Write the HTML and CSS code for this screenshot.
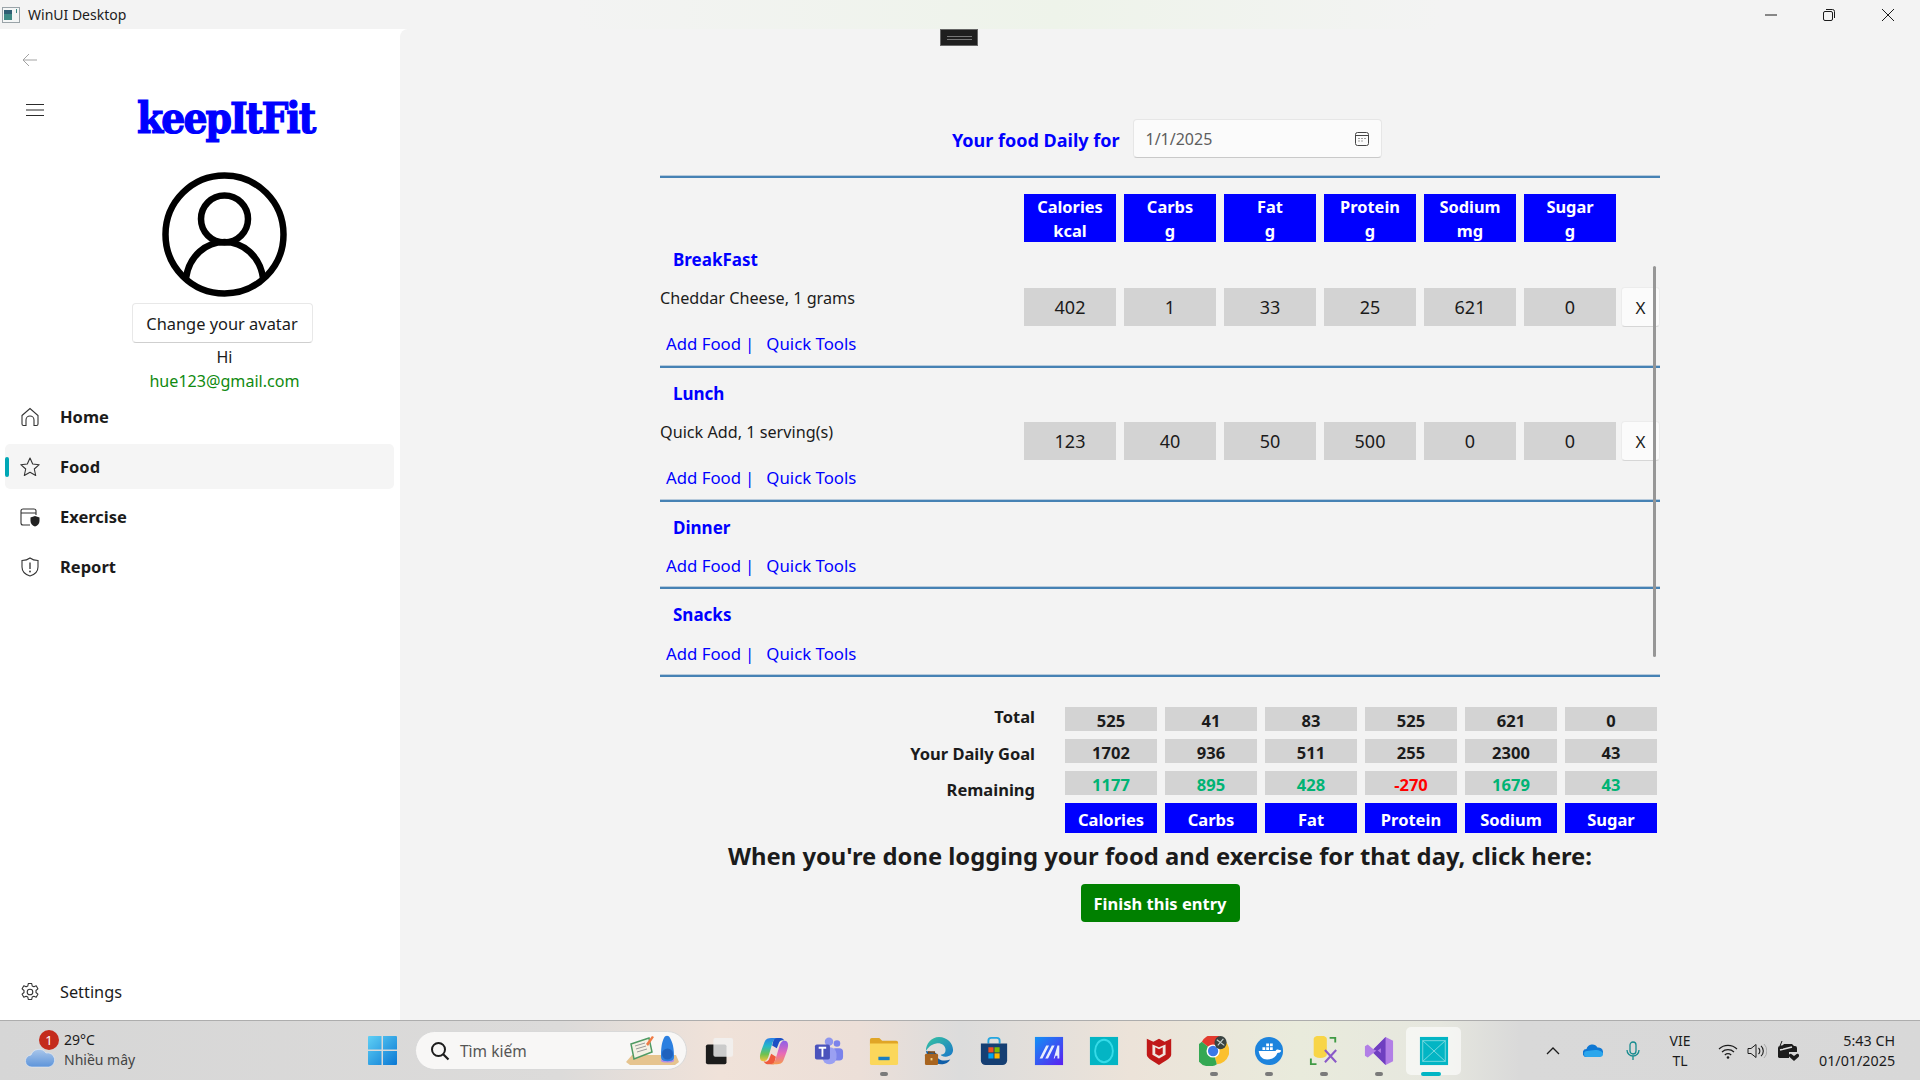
FILE: index.html
```html
<!DOCTYPE html>
<html lang="en">

<head>
  <meta charset="UTF-8">
  <meta name="viewport" content="width=device-width, initial-scale=1.0">
  <title>WinUI Desktop</title>
  <link rel="stylesheet" href="styles.css">
</head>

<body>
  <div class="window">

    <header class="titlebar">
      <svg class="app-icon" viewBox="0 0 18 16" width="18" height="16">
        <rect x=".5" y=".5" width="17" height="15" fill="#f4f6f6" stroke="#9aa3a8"/>
        <rect x="2" y="3" width="8" height="10" fill="#3d8a86"/>
        <rect x="2" y="3" width="8" height="4" fill="#2f5f74"/>
        <rect x="14" y="2" width="1" height="4" fill="#3d8a86"/>
      </svg>
      <span class="app-title">WinUI Desktop</span>
      <div class="win-buttons">
        <button class="win-btn"><svg viewBox="0 0 12 12" width="12" height="12"><path d="M0 6h12" stroke="#1a1a1a" fill="none"/></svg></button>
        <button class="win-btn"><svg viewBox="0 0 12 12" width="12" height="12"><rect x=".5" y="2.500" width="9" height="9" rx="1.500" stroke="#1a1a1a" fill="none"/><path d="M3 .5h6.500a2 2 0 0 1 2 2V9" stroke="#1a1a1a" fill="none"/></svg></button>
        <button class="win-btn"><svg viewBox="0 0 12 12" width="12" height="12"><path d="M0 0l12 12M12 0L0 12" stroke="#1a1a1a" fill="none"/></svg></button>
      </div>
    </header>

    <div class="content">

      <aside class="sidebar">
        <div class="back-row">
          <svg viewBox="0 0 16 14" width="16" height="14"><path d="M15 7H1M7 1L1 7l6 6" stroke="#a3a3a3" stroke-width="1" fill="none"/></svg>
        </div>
        <div class="logo-row">
          <svg class="hamburger" viewBox="0 0 18 14" width="18" height="14"><path d="M0 1.500h18M0 7h18M0 12.500h18" stroke="#2b2b2b" stroke-width="1.200" fill="none"/></svg>
          <span class="logo">keepItFit</span>
        </div>

        <div class="profile">
          <svg class="avatar" viewBox="0 0 125 125" width="125" height="125">
            <g fill="none" stroke="#000" stroke-width="6.500">
              <circle cx="62.500" cy="62.500" r="59"/>
              <circle cx="62.500" cy="47" r="23.500"/>
              <path d="M24 106c3-22 20-36 38.500-36S98 84 101 106"/>
            </g>
          </svg>
          <button class="avatar-btn">Change your avatar</button>
          <div class="hi">Hi</div>
          <div class="email">hue123@gmail.com</div>
        </div>

        <nav class="nav">
          <a class="nav-item">
            <svg viewBox="0 0 20 20" width="20" height="20"><path d="M2 8.500L10 1.500l8 7V17a1.500 1.500 0 0 1-1.500 1.500H14V13a4 4 0 0 0-8 0v5.500H3.500A1.500 1.500 0 0 1 2 17z" fill="none" stroke="#333" stroke-width="1.100"/></svg>
            <span>Home</span>
          </a>
          <a class="nav-item active">
            <svg viewBox="0 0 20 20" width="20" height="20"><path d="M10 1l2.700 6 6.500.7-4.900 4.300 1.400 6.500L10 15.200l-5.700 3.300 1.400-6.500L.8 7.700 7.300 7z" fill="none" stroke="#333" stroke-width="1.100" stroke-linejoin="round"/></svg>
            <span>Food</span>
          </a>
          <a class="nav-item">
            <svg viewBox="0 0 20 20" width="20" height="20"><path d="M10 18H3a2 2 0 0 1-2-2V4a2 2 0 0 1 2-2h11a2 2 0 0 1 2 2v4M1 6h15" fill="none" stroke="#333" stroke-width="1.100"/><path d="M15 9l4.500 1.500V14c0 3-2 4.500-4.500 5.500-2.500-1-4.500-2.500-4.500-5.500v-3.500z" fill="#222"/></svg>
            <span>Exercise</span>
          </a>
          <a class="nav-item">
            <svg viewBox="0 0 20 20" width="20" height="20"><path d="M10 1c2 1.600 4.500 2.500 8 2.500V10c0 4.500-3 7.500-8 9-5-1.500-8-4.500-8-9V3.500C5.500 3.500 8 2.600 10 1z" fill="none" stroke="#333" stroke-width="1.100"/><path d="M10 5.500v6.500" stroke="#333" stroke-width="1.300"/><circle cx="10" cy="14.500" r=".9" fill="#333"/></svg>
            <span>Report</span>
          </a>
        </nav>

        <a class="nav-item settings">
          <svg viewBox="0 0 20 20" width="20" height="20"><circle cx="10" cy="10" r="2.800" fill="none" stroke="#333" stroke-width="1.100"/><path d="M8.300 1.500h3.400l.5 2.500 1.700.8 2.300-1 1.700 3-1.900 1.700v2l1.900 1.700-1.700 3-2.300-1-1.700.8-.5 2.500H8.300l-.5-2.500-1.700-.8-2.300 1-1.700-3 1.900-1.700v-2L2.100 6.800l1.700-3 2.300 1 1.700-.8z" fill="none" stroke="#333" stroke-width="1.100" stroke-linejoin="round"/></svg>
          <span class="settings-label">Settings</span>
        </a>
      </aside>

      <main class="main">
        <div class="debug-bar"><i></i></div>
        <div class="scroll-thumb"></div>

        <div class="date-row">
          <span class="date-label">Your food Daily for</span>
          <div class="date-picker">
            <span>1/1/2025</span>
            <svg viewBox="0 0 14 14" width="14" height="14"><rect x=".5" y=".5" width="13" height="13" rx="2" fill="none" stroke="#444"/><path d="M1 3.500h12" stroke="#444"/><path d="M3.500 6.500h1M6.500 6.500h1M9.500 6.500h1M3.500 9h1M6.500 9h1" stroke="#444" stroke-width="1.200"/></svg>
          </div>
        </div>

        <div class="head-cells cells">
          <div class="head-cell">Calories<br>kcal</div>
          <div class="head-cell">Carbs<br>g</div>
          <div class="head-cell">Fat<br>g</div>
          <div class="head-cell">Protein<br>g</div>
          <div class="head-cell">Sodium<br>mg</div>
          <div class="head-cell">Sugar<br>g</div>
        </div>

        <section class="meal first">
          <h3 class="meal-title">BreakFast</h3>
          <div class="food-row">
            <span class="food-name">Cheddar Cheese, 1 grams</span>
            <div class="cells">
              <div class="cell">402</div><div class="cell">1</div><div class="cell">33</div>
              <div class="cell">25</div><div class="cell">621</div><div class="cell">0</div>
            </div>
            <button class="remove-btn">X</button>
          </div>
          <div class="meal-links"><a>Add Food</a><span class="sep">|</span><a>Quick Tools</a></div>
        </section>

        <section class="meal">
          <h3 class="meal-title">Lunch</h3>
          <div class="food-row">
            <span class="food-name">Quick Add, 1 serving(s)</span>
            <div class="cells">
              <div class="cell">123</div><div class="cell">40</div><div class="cell">50</div>
              <div class="cell">500</div><div class="cell">0</div><div class="cell">0</div>
            </div>
            <button class="remove-btn">X</button>
          </div>
          <div class="meal-links"><a>Add Food</a><span class="sep">|</span><a>Quick Tools</a></div>
        </section>

        <section class="meal empty dinner">
          <h3 class="meal-title">Dinner</h3>
          <div class="meal-links"><a>Add Food</a><span class="sep">|</span><a>Quick Tools</a></div>
        </section>

        <section class="meal empty snacks">
          <h3 class="meal-title">Snacks</h3>
          <div class="meal-links"><a>Add Food</a><span class="sep">|</span><a>Quick Tools</a></div>
        </section>

        <div class="totals">
          <div class="total-labels">
            <div>Total</div>
            <div>Your Daily Goal</div>
            <div>Remaining</div>
          </div>
          <div class="total-rows">
            <div class="cells">
              <div class="sum">525</div><div class="sum">41</div><div class="sum">83</div>
              <div class="sum">525</div><div class="sum">621</div><div class="sum">0</div>
            </div>
            <div class="cells">
              <div class="sum">1702</div><div class="sum">936</div><div class="sum">511</div>
              <div class="sum">255</div><div class="sum">2300</div><div class="sum">43</div>
            </div>
            <div class="cells">
              <div class="sum good">1177</div><div class="sum good">895</div><div class="sum good">428</div>
              <div class="sum bad">-270</div><div class="sum good">1679</div><div class="sum good">43</div>
            </div>
            <div class="cells">
              <div class="foot-cell">Calories</div><div class="foot-cell">Carbs</div><div class="foot-cell">Fat</div>
              <div class="foot-cell">Protein</div><div class="foot-cell">Sodium</div><div class="foot-cell">Sugar</div>
            </div>
          </div>
        </div>

        <h2 class="done-text">When you're done logging your food and exercise for that day, click here:</h2>
        <button class="finish-btn">Finish this entry</button>
      </main>
    </div>

    <footer class="taskbar">
      <div class="weather">
        <span class="weather-icon">
          <svg viewBox="0 0 31 20" width="31" height="20"><defs><linearGradient id="cloud" x1="0" y1="0" x2="0" y2="1"><stop offset="0" stop-color="#a9c6ea"/><stop offset="1" stop-color="#5d94da"/></linearGradient></defs><path d="M7 19a6 6 0 0 1-1-12 8.500 8.500 0 0 1 15-2 6.500 6.500 0 0 1 3 14z" fill="url(#cloud)" stroke="#e8eef6" stroke-width=".6"/></svg>
          <b class="badge">1</b>
        </span>
        <div class="weather-text">
          <div>29°C</div>
          <div class="weather-sub">Nhiều mây</div>
        </div>
      </div>

      <svg class="start" viewBox="0 0 29 29" width="29" height="29">
        <defs><linearGradient id="win" x1="0" y1="0" x2="1" y2="1"><stop offset="0" stop-color="#5fd0f5"/><stop offset="1" stop-color="#0a78d4"/></linearGradient></defs>
        <path d="M0 1a1 1 0 0 1 1-1h12.500v13.500H0zM15 0h13a1 1 0 0 1 1 1v12.500H15zM0 15h13.500v14H1a1 1 0 0 1-1-1zM15 15h14v13a1 1 0 0 1-1 1H15z" fill="url(#win)"/>
      </svg>

      <div class="search">
        <svg viewBox="0 0 20 20" width="20" height="20"><circle cx="8.500" cy="8.500" r="6.500" fill="none" stroke="#1c1c1c" stroke-width="2"/><path d="M13 13l5.500 5.500" stroke="#1c1c1c" stroke-width="2.200"/></svg>
        <span>Tìm kiếm</span>
        <svg class="search-art" viewBox="0 0 56 34" width="56" height="34">
          <path d="M2 28l6-7h44l3 7-4 3H6z" fill="#e6c48f"/>
          <path d="M7 10l18-6 3 14-18 7z" fill="#f4f1e4" stroke="#4f9a63" stroke-width="1.500"/>
          <path d="M11 12l10-3M12 15l10-3M13 18l10-3" stroke="#9a9a9a"/>
          <path d="M22 10l6-8 2 1-6 9z" fill="#ef7b45"/>
          <path d="M37 22c0-12 2-16 3-18 1-3 5-3 6 0 1 2 4 6 4 18 0 4-1 6-6 6s-7-2-7-6z" fill="#2b7fe0"/>
          <circle cx="43.500" cy="20" r="5.500" fill="#1f62bd"/>
          <path d="M37 25c2 3 11 3 13 0v2c-1 2-12 2-13 0z" fill="#b48ee8"/>
        </svg>
      </div>

      <div class="apps">
        <span class="tb-app">
          <svg viewBox="0 0 32 32"><rect x="2" y="9" width="22" height="21" rx="2" fill="#1c1c1c"/><rect x="10" y="2" width="21" height="20" rx="2" fill="#f1f1f1" fill-opacity=".82"/></svg>
        </span>
        <span class="tb-app">
          <svg viewBox="0 0 32 32"><defs><linearGradient id="cp1" x1="0" y1="0" x2="0" y2="1"><stop offset="0" stop-color="#2a7fe8"/><stop offset=".35" stop-color="#25b9c8"/><stop offset=".7" stop-color="#6fc24f"/><stop offset="1" stop-color="#f4c23c"/></linearGradient><linearGradient id="cp2" x1="0" y1="0" x2="0" y2="1"><stop offset="0" stop-color="#8c5fe8"/><stop offset=".55" stop-color="#e86ab8"/><stop offset="1" stop-color="#f59a4e"/></linearGradient></defs><path d="M16 2h7c2 0 3 1 4 3-3-1-5 0-6 3l-2 5-5-3z" fill="#1c50c4"/><path d="M16 30H9c-2 0-3-1-4-3 3 1 5 0 6-3l2-5 5 3z" fill="#ef5a3c"/><path d="M13 2h7c-3 0-4.500 2-5.500 5L10 22c-1 3-3 5-5 5-3 0-4-2-4-5 0-2 1-5 2-8l3-8c1-3 4-4 7-4z" fill="url(#cp1)"/><path d="M19 30h-7c3 0 4.500-2 5.500-5L22 10c1-3 3-5 5-5 3 0 4 2 4 5 0 2-1 5-2 8l-3 8c-1 3-4 4-7 4z" fill="url(#cp2)"/></svg>
        </span>
        <span class="tb-app">
          <svg viewBox="0 0 32 32"><circle cx="24.500" cy="8" r="3.500" fill="#7b83eb"/><rect x="19" y="13" width="12" height="13" rx="4" fill="#7b83eb"/><circle cx="16" cy="6" r="4.500" fill="#8f96ee"/><rect x="9" y="12" width="15" height="18" rx="7" fill="#9aa0f2"/><rect x="1" y="9" width="16" height="16" rx="2" fill="#4b53bc"/><path d="M5 12.500h8M9 12.500V22" stroke="#fff" stroke-width="2" fill="none"/></svg>
        </span>
        <span class="tb-app dot">
          <svg viewBox="0 0 32 32"><path d="M1 4a2 2 0 0 1 2-2h8l3 3h15a2 2 0 0 1 2 2v3H1z" fill="#e0a526"/><path d="M1 8h30v21a2 2 0 0 1-2 2H3a2 2 0 0 1-2-2z" fill="#fbd75b"/><path d="M10 22h12v3a1 1 0 0 1-1 1H11a1 1 0 0 1-1-1z" fill="#1b7fc4"/><path d="M10 31v-5h12v5z" fill="#fbd75b"/></svg>
        </span>
        <span class="tb-app">
          <svg viewBox="0 0 32 32"><defs><linearGradient id="edge" x1="0" y1="0" x2="1" y2="1"><stop offset="0" stop-color="#36c5a0"/><stop offset="1" stop-color="#1b78c9"/></linearGradient></defs><path d="M2 16C2 8 8 1 16 1c9 0 15 7 15 14 0 4-3 7-8 7-3 0-5-1-5-2 3 0 5-2 5-5 0-5-5-8-10-7-6 1-9 5-11 8z" fill="url(#edge)"/><path d="M2 16c2 8 10 15 18 14 3 0 6-2 8-5-8 3-15 0-15-7z" fill="#0f5ea8"/><rect x="1" y="19" width="14" height="12" rx="1.500" fill="#a8641f"/><path d="M5 19v-2h6v2" stroke="#7b4712" stroke-width="1.500" fill="none"/><rect x="7" y="23.500" width="2" height="2.500" fill="#f3d48a"/></svg>
        </span>
        <span class="tb-app">
          <svg viewBox="0 0 32 32"><path d="M10 8V5a3 3 0 0 1 3-3h6a3 3 0 0 1 3 3v3" stroke="#25a6e0" stroke-width="2" fill="none"/><path d="M2 8h28v18a5 5 0 0 1-5 5H7a5 5 0 0 1-5-5z" fill="#153f73"/><rect x="10" y="12" width="5.500" height="5.500" fill="#f25022"/><rect x="16.500" y="12" width="5.500" height="5.500" fill="#7fba00"/><rect x="10" y="18.500" width="5.500" height="5.500" fill="#00a4ef"/><rect x="16.500" y="18.500" width="5.500" height="5.500" fill="#ffb900"/></svg>
        </span>
        <span class="tb-app">
          <svg viewBox="0 0 32 32"><defs><linearGradient id="maui" x1="0" y1="0" x2="1" y2="1"><stop offset="0" stop-color="#1292f5"/><stop offset="1" stop-color="#5b1ff0"/></linearGradient></defs><rect x="1" y="1" width="30" height="30" fill="url(#maui)"/><path d="M6 24l7-14h3l-7 14zM12 24l7-14h3l-7 14zM21 24l4-14h2v14h-2v-3h-2l-1 3z" fill="#e9eefc"/></svg>
        </span>
        <span class="tb-app">
          <svg viewBox="0 0 32 32"><rect x="1" y="1" width="30" height="30" fill="#03b5c4"/><ellipse cx="16" cy="16" rx="9.500" ry="12" fill="none" stroke="#35dbe8" stroke-width="2"/></svg>
        </span>
        <span class="tb-app">
          <svg viewBox="0 0 32 32"><path d="M3 3l7 3 6-3 6 3 7-3v17c0 4-9 8-13 11C12 28 3 24 3 20z" fill="#c01818"/><path d="M9 9l7 3 7-3v11l-7 4-7-4z" fill="#efe6df"/><path d="M12 12l4 2 4-2v7l-4 2-4-2z" fill="#c01818"/></svg>
        </span>
        <span class="tb-app dot">
          <svg viewBox="0 0 32 32"><path d="M15 16L3 6a14 14 0 0 1 24-1z" fill="#e33b2e"/><path d="M15 16L27 5a14 14 0 0 1-8 25z" fill="#fbc02d"/><path d="M15 16L3 6a14 14 0 0 0 16 24z" fill="#34a853"/><circle cx="15" cy="16" r="7" fill="#fff"/><circle cx="15" cy="16" r="5.500" fill="#3b78e7"/><ellipse cx="23" cy="7" rx="6.500" ry="7" fill="#3a4340"/><path d="M19 4l8 6M20 10l6-7" stroke="#c9d3cf" stroke-width="1.200"/></svg>
        </span>
        <span class="tb-app dot">
          <svg viewBox="0 0 32 32"><circle cx="16" cy="16" r="15" fill="#1d84dd"/><path d="M5 16h18c1-2 3-2 4-1 1 0 2 .5 2 1-1 2-3 2-4 2-2 5-6 7-11 7-5 0-8-3-9-9z" fill="#fff"/><path d="M9 12h3v3H9zM13 12h3v3h-3zM17 12h3v3h-3zM13 8h3v3h-3zM17 8h3v3h-3z" fill="#fff"/></svg>
        </span>
        <span class="tb-app dot">
          <svg viewBox="0 0 32 32"><path d="M5 3a6 3 0 0 1 14 0v17a6 3 0 0 1-14 0z" fill="#f8d547"/><path d="M22 2h6v5M2 24v6h6" stroke="#3f9a44" stroke-width="2" fill="none"/><path d="M17 28l12-13M29 28L17 15" stroke="#8a5ac8" stroke-width="2.200" fill="none"/></svg>
        </span>
        <span class="tb-app dot">
          <svg viewBox="0 0 32 32"><path d="M23 1l8 4v22l-8 4-13-13-6 5-3-2V11l3-2 6 5z" fill="#b27fe6"/><path d="M23 1v30l-13-13 4-3 4 3V13l-4 3-4-2z" fill="#6f3fc0"/></svg>
        </span>
        <span class="tb-app active">
          <svg viewBox="0 0 32 32"><rect x="1" y="1" width="30" height="30" fill="#03b5c4"/><rect x="4" y="5" width="24" height="22" fill="none" stroke="#7edbe0" stroke-width="1"/><path d="M4 5l24 22M28 5L4 27" stroke="#7edbe0" stroke-width="1"/></svg>
        </span>
      </div>

      <div class="tray">
        <svg class="t-chevron" viewBox="0 0 14 8" width="14" height="8"><path d="M1 7l6-6 6 6" stroke="#1c1c1c" stroke-width="1.300" fill="none"/></svg>
        <svg class="t-cloud" viewBox="0 0 20 13" width="20" height="13"><path d="M4 13a4 4 0 0 1-.5-8A6 6 0 0 1 14.500 3.500 4.800 4.800 0 0 1 16 13z" fill="#0f78d4"/><path d="M4 13a3 3 0 0 1 0-6l8-1c5 0 8 2 8 4 0 2-1 3-4 3z" fill="#2ba6ec"/></svg>
        <svg class="t-mic" viewBox="0 0 14 20" width="14" height="20"><rect x="4" y="1" width="6" height="12" rx="3" fill="none" stroke="#168b8f" stroke-width="1.300"/><path d="M1 9a6 6 0 0 0 12 0M7 15v4" stroke="#168b8f" stroke-width="1.300" fill="none"/></svg>
        <div class="t-lang"><div>VIE</div><div>TL</div></div>
        <svg class="t-wifi" viewBox="0 0 20 16" width="20" height="16"><path d="M1 6a13 13 0 0 1 18 0M4 9a9 9 0 0 1 12 0M6.800 12a5 5 0 0 1 6.400 0" stroke="#1c1c1c" stroke-width="1.200" fill="none"/><circle cx="10" cy="14.500" r="1.300" fill="#1c1c1c"/></svg>
        <svg class="t-vol" viewBox="0 0 20 16" width="20" height="16"><path d="M1 5.500h3L9 1.500v13l-5-4H1z" stroke="#1c1c1c" fill="none"/><path d="M11.500 5a4 4 0 0 1 0 6M14 2.800a7 7 0 0 1 0 10.400" stroke="#1c1c1c" stroke-width="1.100" fill="none"/><path d="M17 1a10 10 0 0 1 0 14" stroke="#aaa" stroke-width="1" fill="none"/></svg>
        <svg class="t-batt" viewBox="0 0 22 20" width="22" height="20"><path d="M1 16V7a2 2 0 0 1 2-2h2l2-2h8l2 2h1a2 2 0 0 1 2 2v4h-8v6H3a2 2 0 0 1-2-1z" fill="#1c1c1c"/><path d="M3 9l12-3" stroke="#e0e0e0" stroke-width="1.500"/><path d="M5 0L3 5h3L5 8" stroke="#1c1c1c" fill="none"/><path d="M17 20l-4.500-4c-2-2 1-4.500 2.500-2.500l2 1.500 2-1.500c1.500-2 4.500.5 2.500 2.500z" fill="#1c1c1c"/></svg>
        <div class="t-clock"><div>5:43 CH</div><div>01/01/2025</div></div>
      </div>
    </footer>
  </div>
</body>

</html>
```

FILE: styles.css
```css
/* Basic page */
* {
  box-sizing: border-box;
}

body {
  margin: 0;
  overflow: hidden;
  font-family: "Noto Sans", "Open Sans", sans-serif;
  font-size: 16px;
  color: #1b1b1b;
}

button {
  font-family: inherit;
}

.window {
  display: flex;
  flex-direction: column;
  width: 1920px;
  height: 1080px;
}

/* Title bar */
.titlebar {
  display: flex;
  align-items: center;
  height: 29px;
  flex-shrink: 0;
  padding-left: 2px;
  background: linear-gradient(90deg, #f3f3f3 30%, #eef3ea 55%, #f3f3f3 75%);
}

.app-title {
  margin-left: 8px;
  font-size: 14px;
}

.win-buttons {
  display: flex;
  margin-left: auto;
  padding-right: 3px;
}

.win-btn {
  display: flex;
  justify-content: center;
  align-items: center;
  width: 58.500px;
  height: 29px;
  padding: 0;
  border: none;
  background: none;
}

/* Sidebar + main */
.content {
  display: flex;
  flex: 1;
  min-height: 0;
  background: #fff;
}

.sidebar {
  display: flex;
  flex-direction: column;
  width: 400px;
  flex-shrink: 0;
  padding-top: 11px;
  padding-bottom: 6px;
}

.back-row {
  display: flex;
  align-items: center;
  height: 40px;
  padding-left: 22px;
}

.logo-row {
  display: flex;
  align-items: center;
  height: 56px;
  margin-top: 10px;
  padding-left: 26px;
}

.hamburger {
  align-self: flex-start;
  margin-top: 13px;
}

.logo {
  margin-left: 93px;
  font-family: "DejaVu Serif", serif;
  font-stretch: condensed;
  font-size: 42px;
  font-weight: bold;
  letter-spacing: -1.900px;
  color: #0000ff;
  -webkit-text-stroke: 1.200px #0000ff;
}

.profile {
  display: flex;
  flex-direction: column;
  align-items: center;
  margin-top: 26px;
  padding-left: 49px;
}

.avatar {
  display: block;
}

.avatar-btn {
  width: 181px;
  height: 40px;
  margin-top: 6px;
  margin-right: 5px;
  padding: 1px 0 0;
  border: 1px solid #e8e8e8;
  border-bottom-color: #cfcfcf;
  border-radius: 4px;
  background: #fff;
  font-size: 16.400px;
  color: #1b1b1b;
}

.hi {
  height: 24px;
  margin-top: 2px;
  line-height: 24px;
}

.email {
  height: 24px;
  font-size: 16.100px;
  line-height: 24px;
  color: #108a10;
}

.nav {
  display: flex;
  flex-direction: column;
  gap: 5px;
  margin-top: 1px;
}

.nav-item {
  display: flex;
  align-items: center;
  gap: 20px;
  position: relative;
  height: 45px;
  margin: 0 6px 0 5px;
  padding-left: 15px;
  border-radius: 5px;
  font-size: 16.500px;
  font-weight: 700;
  color: #1b1b1b;
}

.nav-item.active {
  background: #f5f5f5;
}

.nav-item.active::before {
  content: "";
  position: absolute;
  left: 0;
  top: 13px;
  width: 4px;
  height: 20px;
  border-radius: 2px;
  background: #00a7b5;
}

.settings {
  margin-top: auto;
}

.settings-label {
  font-size: 16.300px;
  font-weight: 400;
}

/* Main area */
.main {
  position: relative;
  flex: 1;
  padding: 90px 260px 0 260px;
  border-top-left-radius: 8px;
  background: #f3f3f3;
}

.debug-bar {
  position: absolute;
  left: 540px;
  top: 0;
  display: flex;
  align-items: center;
  justify-content: center;
  width: 38px;
  height: 17px;
  border: 1px solid #666;
  background: #1f1f1f;
}

.debug-bar i {
  width: 25px;
  height: 4px;
  border-top: 1px solid #777;
  border-bottom: 1px solid #777;
}

.scroll-thumb {
  position: absolute;
  left: 1253px;
  top: 237px;
  width: 3px;
  height: 391px;
  border-radius: 2px;
  background: #969696;
}

.date-row {
  display: flex;
  align-items: center;
  gap: 13px;
  height: 39px;
  padding-left: 292px;
}

.date-label {
  padding-top: 2px;
  font-size: 18px;
  font-weight: 700;
  color: #0000ff;
}

.date-picker {
  display: flex;
  justify-content: space-between;
  align-items: center;
  width: 249px;
  height: 39px;
  padding: 0 12px;
  border: 1px solid #e6e6e6;
  border-bottom-color: #c9c9c9;
  border-radius: 4px;
  background: #fbfbfb;
  color: #5e5e5e;
}

.cells {
  display: flex;
  gap: 8px;
}

.head-cells {
  margin-top: 18px;
  padding-top: 16px;
  padding-left: 364px;
  border-top: 2px solid #4682b4;
  box-shadow: 0 -1px 0 #b7cadb;
}

.head-cell {
  width: 92px;
  height: 48px;
  padding-top: 1px;
  background: #0000ff;
  font-size: 16.400px;
  font-weight: 700;
  line-height: 23.500px;
  text-align: center;
  color: #fff;
}

/* Meal sections */
.meal {
  padding: 13px 0 10px;
  border-bottom: 2px solid #4682b4;
  box-shadow: inset 0 -1px 0 #b7cadb;
}

.meal.first {
  padding-top: 5px;
}

.meal.dinner {
  padding-bottom: 9px;
}

.meal.snacks {
  padding-bottom: 9px;
}

.meal-title {
  height: 24px;
  margin: 0;
  padding-left: 13px;
  font-size: 17px;
  font-weight: 700;
  line-height: 26px;
  color: #0000ff;
}

.food-row {
  display: flex;
  height: 38px;
  margin-top: 17px;
}

.food-name {
  width: 364px;
  font-size: 16.200px;
  line-height: 20px;
}

.cell {
  display: flex;
  justify-content: center;
  align-items: center;
  width: 92px;
  height: 38px;
  background: #d3d3d3;
  font-size: 18px;
}

.remove-btn {
  width: 39px;
  height: 40px;
  margin-top: -1px;
  margin-left: 5px;
  padding: 0;
  border: 1px solid #ececec;
  border-bottom-color: #d6d6d6;
  border-radius: 4px;
  background: #fbfbfb;
  font-size: 17px;
  color: #1b1b1b;
}

.meal-links {
  display: flex;
  height: 24px;
  margin-top: 6px;
  padding-left: 6px;
  font-size: 16.800px;
  line-height: 24px;
  color: #0000ff;
}

.meal.empty .meal-links {
  margin-top: 15px;
}

.meal.snacks .meal-links {
  margin-top: 16px;
}

.sep {
  margin: 0 12px 0 4px;
}

/* Totals */
.totals {
  display: flex;
  margin-top: 22px;
}

.total-labels {
  width: 375px;
  margin-right: 30px;
  font-size: 16.500px;
  font-weight: 700;
  text-align: right;
}

.total-labels div {
  height: 36.500px;
  line-height: 36.500px;
}

.total-rows {
  display: flex;
  flex-direction: column;
  gap: 8px;
  padding-top: 8px;
}

.sum {
  display: flex;
  justify-content: center;
  align-items: center;
  width: 92px;
  height: 24px;
  padding-top: 2px;
  background: #d3d3d3;
  font-size: 16.500px;
  font-weight: 700;
}

.sum.good {
  color: #00b374;
}

.sum.bad {
  color: #ff0000;
}

.foot-cell {
  display: flex;
  justify-content: center;
  align-items: center;
  width: 92px;
  height: 30px;
  padding-top: 2px;
  background: #0000ff;
  font-size: 16.500px;
  font-weight: 700;
  color: #fff;
}

.done-text {
  height: 32px;
  margin: 7px 0 1px;
  font-size: 23.800px;
  font-weight: 700;
  line-height: 32px;
  text-align: center;
}

.finish-btn {
  display: block;
  width: 159px;
  height: 38px;
  margin: 12px auto 0;
  padding: 0;
  border: none;
  border-radius: 4px;
  background: #008000;
  font-size: 16.500px;
  font-weight: 700;
  color: #fff;
}

/* Taskbar */
.taskbar {
  display: flex;
  align-items: center;
  height: 60px;
  flex-shrink: 0;
  border-top: 1px solid #adadad;
  background: linear-gradient(90deg, #d6d6d6 0, #dcdbda 560px, #f0e2d9 720px, #ecdfd8 860px, #dcdcdc 960px, #ece3d9 1130px, #e9ebdc 1300px, #e6e7df 1440px, #d9d9d9 1520px, #d8d8d8 100%);
}

.weather {
  display: flex;
  align-items: center;
  gap: 8px;
  width: 368px;
  flex-shrink: 0;
  padding-left: 25px;
  padding-bottom: 2px;
  font-size: 14px;
  line-height: 20px;
}

.weather-icon {
  position: relative;
  width: 31px;
  height: 20px;
  margin-top: 16px;
}

.badge {
  position: absolute;
  left: 14px;
  top: -18px;
  width: 20px;
  height: 20px;
  border-radius: 50%;
  background: #c42b1c;
  font-size: 13px;
  font-weight: 400;
  line-height: 20px;
  text-align: center;
  color: #fff;
}

.weather-sub {
  color: #444;
}

.start {
  flex-shrink: 0;
}

.search {
  display: flex;
  align-items: center;
  width: 272px;
  height: 39px;
  flex-shrink: 0;
  margin-left: 18px;
  padding: 0 6px 0 14px;
  border: 1px solid #d9d9d9;
  border-radius: 20px;
  background: #f8f7f6;
  font-size: 15.500px;
  color: #555;
}

.search span {
  margin-left: 10px;
}

.search-art {
  margin-left: auto;
}

.apps {
  display: flex;
  margin-left: 4px;
}

.tb-app {
  display: flex;
  justify-content: center;
  align-items: center;
  position: relative;
  width: 55px;
  height: 48px;
}

.tb-app svg {
  width: 30px;
  height: 30px;
}

.tb-app.dot::after {
  content: "";
  position: absolute;
  left: 24px;
  bottom: -1px;
  width: 8px;
  height: 4px;
  border-radius: 2px;
  background: #7a7a7a;
}

.tb-app.active {
  border-radius: 5px;
  background: rgba(255, 255, 255, 0.6);
}

.tb-app.active::after {
  content: "";
  position: absolute;
  left: 15px;
  bottom: -1px;
  width: 20px;
  height: 4px;
  border-radius: 2px;
  background: #00b5c4;
}

.tray {
  display: flex;
  align-items: center;
  margin-left: 85px;
  font-size: 14px;
  line-height: 20px;
  color: #1b1b1b;
}

.t-cloud {
  margin-left: 23px;
}

.t-mic {
  margin-left: 23px;
}

.t-lang {
  width: 30px;
  margin-left: 25px;
  text-align: center;
}

.t-wifi {
  margin-left: 23px;
}

.t-vol {
  margin-left: 9px;
}

.t-batt {
  margin-left: 10px;
}

.t-clock {
  margin-left: 20px;
  font-size: 14.300px;
  text-align: right;
}
```
